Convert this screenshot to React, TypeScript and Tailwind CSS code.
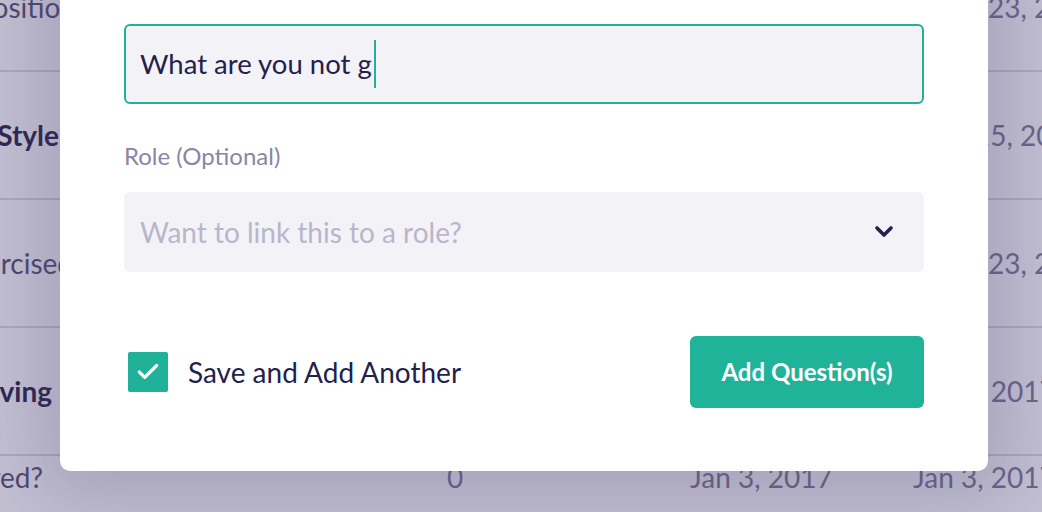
import { Check } from 'lucide-react'

const ROWS = [
  { title: 'Position', bold: false, left: 'w-[76px]', d2: 'Jan 23, 2017', pad: 'pl-[27px]' },
  { title: 'Style', bold: true, left: 'w-[59px]', d2: 'Jan 15, 2017', pad: 'pl-[13px]' },
  { title: 'Exercised', bold: false, left: 'w-[73px]', d2: 'Jan 23, 2017', pad: 'pl-[27px]' },
  { title: 'Moving', bold: true, left: 'w-[52px]', d2: 'Jan 5, 2017', pad: 'pl-[0px]' },
]

function Backdrop() {
  return (
    <div className="mt-[-56px] flex flex-col text-[28px] text-[#6a6588]">
      {ROWS.map((row) => (
        <div key={row.title} className="flex h-[128px] items-center border-b-2 border-[#aba8c0]">
          <div className={`${row.left} flex shrink-0 justify-end whitespace-nowrap ${row.bold ? 'font-bold text-[#2d2852]' : 'text-[#4e496f]'}`}>
            {row.title}
          </div>
          <div className={`ml-auto w-[129px] shrink-0 whitespace-nowrap ${row.pad}`}>{row.d2}</div>
        </div>
      ))}
      <div className="flex h-[120px] items-start">
        <div className="flex w-[43px] shrink-0 justify-end whitespace-nowrap text-[#4e496f]">Covered?</div>
        <div className="ml-[404px] w-[243px] shrink-0">0</div>
        <div className="w-[223px] shrink-0 whitespace-nowrap">Jan 3, 2017</div>
        <div className="w-[129px] shrink-0 whitespace-nowrap">Jan 3, 2017</div>
      </div>
    </div>
  )
}

export default function App() {
  return (
    <div className="relative h-[512px] w-[1042px] overflow-hidden bg-[#c4c1d3] font-['Lato','Noto_Sans',sans-serif]">
      <Backdrop />

      <div className="absolute left-[60px] top-[-60px] w-[928px] rounded-[10px] bg-white px-[64px] pt-[84px] pb-[63px] shadow-[0_8px_70px_24px_rgba(70,60,110,0.22)]">
        <div className="flex h-[80px] items-center rounded-[6px] border-2 border-[#1fb199] bg-[#f3f2f7] px-[14px]">
          <span className="text-[27.5px] text-[#241f4b]">What are you not g</span>
          <span className="ml-[2px] h-[48px] w-[2px] bg-[#1fb199]" />
        </div>

        <div className="mt-[38px] text-[24px] leading-[28px] text-[#8a86a4]">Role (Optional)</div>

        <div className="mt-[22px] flex h-[80px] items-center rounded-[6px] bg-[#f3f2f7] pl-[16px] pr-[30px]">
          <span className="text-[28px] text-[#b9b6cb]">Want to link this to a role?</span>
          <svg viewBox="0 0 20 14" className="ml-auto h-[14px] w-[20px]" fill="none" stroke="#241f4b" strokeWidth={3.6} strokeLinecap="round" strokeLinejoin="round">
            <polyline points="3,3 10,10 17,3" />
          </svg>
        </div>

        <div className="mt-[64px] flex items-center">
          <div className="ml-[4px] flex h-[40px] w-[40px] items-center justify-center rounded-[2px] bg-[#1fb199]">
            <Check className="h-[26px] w-[26px] text-white" strokeWidth={3} />
          </div>
          <span className="ml-[20px] text-[28px] text-[#241f4b]">Save and Add Another</span>
          <button type="button" className="ml-auto h-[72px] w-[234px] rounded-[6px] bg-[#1fb399] text-[24px] font-bold text-white">
            Add Question(s)
          </button>
        </div>
      </div>
    </div>
  )
}
